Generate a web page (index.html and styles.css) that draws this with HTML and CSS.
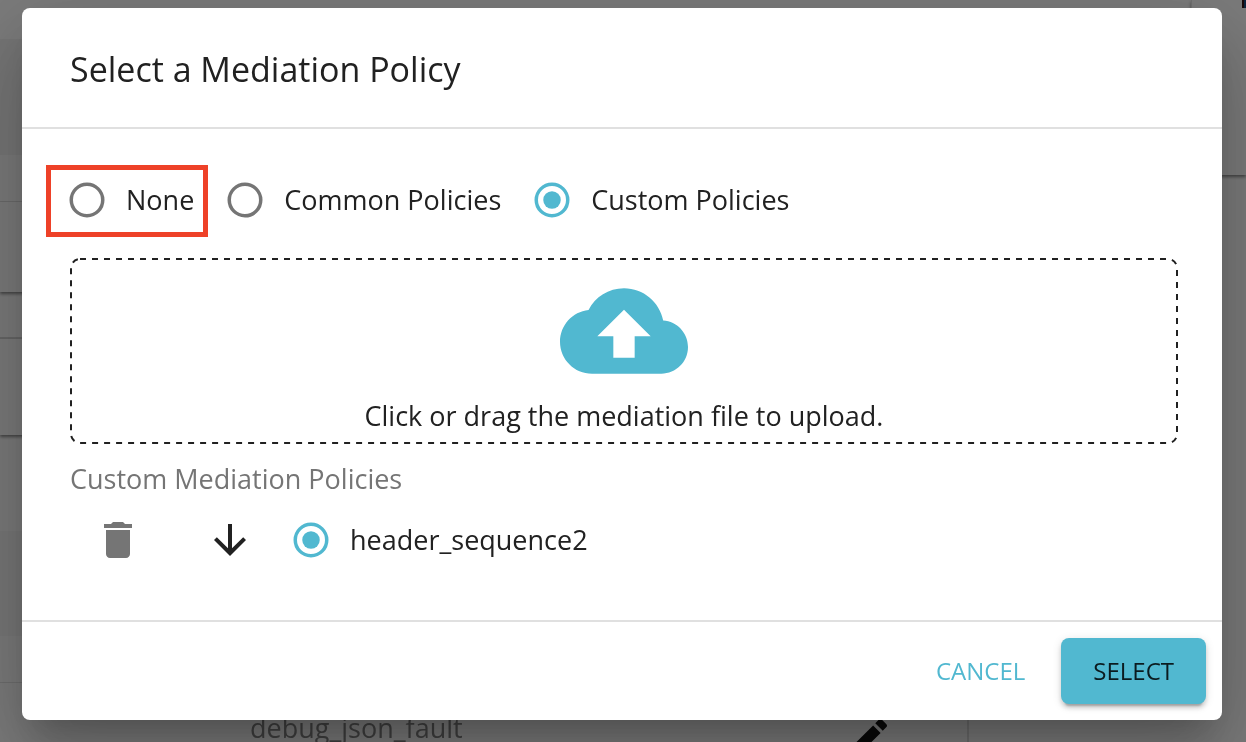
FILE: index.html
```html
<!DOCTYPE html>
<html lang="en">
<head>
<meta charset="utf-8">
<meta name="viewport" content="width=device-width, initial-scale=1">
<title>Select a Mediation Policy</title>
<link rel="stylesheet" href="styles.css">
</head>
<body>
<div class="page" aria-hidden="true">
  <div class="page-main">
    <div class="strip strip-top"></div>
    <div class="strip strip-head"></div>
    <div class="strip strip-line"></div>
    <div class="strip strip-card"></div>
    <div class="strip strip-bar"></div>
    <div class="strip strip-card-tall"></div>
    <div class="strip strip-gap"></div>
    <div class="strip strip-shade"></div>
    <div class="strip strip-rule"></div>
    <div class="resource-row">
      <span>debug_json_fault</span>
      <svg class="icon" viewBox="0 0 24 24"><path d="M3 17.25V21h3.75L17.81 9.94l-3.75-3.75L3 17.25zM20.71 7.04c.39-.39.39-1.02 0-1.41l-2.34-2.34a.9959.9959 0 0 0-1.41 0l-1.83 1.83 3.75 3.75 1.83-1.83z"/></svg>
    </div>
  </div>
  <div class="page-side">
    <div class="side-card"><i class="side-mark"></i></div>
  </div>
</div>

<div class="overlay">
  <form class="dialog" role="dialog" aria-labelledby="dialog-title">
    <header class="dialog-header"><h2 id="dialog-title">Select a Mediation Policy</h2></header>
    <div class="dialog-content">
      <div class="options" role="radiogroup" aria-label="Policy type">
        <label class="option highlighted">
          <span class="radio"><input type="radio" name="type"><svg viewBox="0 0 24 24"><circle class="ring" cx="12" cy="12" r="9"/><circle class="dot" cx="12" cy="12" r="5"/></svg></span>None
        </label>
        <label class="option">
          <span class="radio"><input type="radio" name="type"><svg viewBox="0 0 24 24"><circle class="ring" cx="12" cy="12" r="9"/><circle class="dot" cx="12" cy="12" r="5"/></svg></span>Common Policies
        </label>
        <label class="option">
          <span class="radio"><input type="radio" name="type" checked><svg viewBox="0 0 24 24"><circle class="ring" cx="12" cy="12" r="9"/><circle class="dot" cx="12" cy="12" r="5"/></svg></span>Custom Policies
        </label>
      </div>
      <button type="button" class="dropzone">
        <svg class="dashes"><rect x="1" y="1" rx="9"/></svg>
        <svg class="cloud" viewBox="0 4 24 16"><path d="M19.35 10.04C18.67 6.59 15.64 4 12 4 9.11 4 6.6 5.64 5.35 8.04 2.34 8.36 0 10.91 0 14c0 3.31 2.69 6 6 6h13c2.76 0 5-2.24 5-5 0-2.64-2.05-4.78-4.65-4.96zM14 13v4h-4v-4H7l5-5 5 5h-3z"/></svg>
        <span>Click or drag the mediation file to upload.</span>
      </button>
      <h3 class="caption">Custom Mediation Policies</h3>
      <div class="policy">
        <button type="button" class="icon-button muted" aria-label="Delete"><svg class="icon" viewBox="0 0 24 24"><path d="M6 19c0 1.1.9 2 2 2h8c1.1 0 2-.9 2-2V7H6v12zM19 4h-3.5l-1-1h-5l-1 1H5v2h14V4z"/></svg></button>
        <button type="button" class="icon-button" aria-label="Download"><svg class="icon" viewBox="0 0 24 24"><path d="M20 12l-1.41-1.41L13 16.17V4h-2v12.17l-5.58-5.59L4 12l8 8 8-8z"/></svg></button>
        <label class="option">
          <span class="radio"><input type="radio" name="policy" checked><svg viewBox="0 0 24 24"><circle class="ring" cx="12" cy="12" r="9"/><circle class="dot" cx="12" cy="12" r="5"/></svg></span>header_sequence2
        </label>
      </div>
    </div>
    <footer class="dialog-actions">
      <button type="button" class="button">CANCEL</button>
      <button type="button" class="button primary">SELECT</button>
    </footer>
  </form>
</div>
</body>
</html>
```
FILE: styles.css
```css
* { box-sizing: border-box; }

body {
  margin: 0;
  min-height: 100vh;
  overflow: hidden;
  background: #f6f6f6;
  color: #212121;
  font: 27px/42px "Open Sans", "Noto Sans", sans-serif;
}

h2, h3 { margin: 0; font-weight: 400; }
button { border: 0; background: none; color: inherit; font: inherit; padding: 0; cursor: pointer; }
svg { display: block; fill: currentColor; }
.icon { width: 48px; height: 48px; }

/* Page behind the dialog */
.page { position: fixed; inset: 0; display: flex; overflow: hidden; }
.page-main { flex: 0 0 969px; }
.page-side { flex: 1; display: flex; justify-content: flex-end; }
.strip-top { height: 39px; }
.strip-head { height: 116px; background: #ececec; }
.strip-line { height: 47px; border-bottom: 1px solid #dadada; }
.strip-card { height: 90px; box-shadow: 0 2px 3px #888; }
.strip-bar { height: 47px; border-bottom: 2px solid #cfcfcf; }
.strip-card-tall { height: 96px; box-shadow: 0 2px 3px #888; }
.strip-gap { height: 96px; }
.strip-shade { height: 105px; background: #efefef; }
.strip-rule { height: 47px; border-bottom: 1px solid #dcdcdc; }
.resource-row {
  display: flex;
  justify-content: space-between;
  align-items: flex-start;
  padding: 24px 74px 0 250px;
  border-right: 2px solid #d8d8d8;
  color: #818181;
}
.resource-row .icon { margin-top: 6px; color: #111; }
.side-card {
  width: 55px;
  height: 175px;
  border-left: 1px solid #ddd;
  box-shadow: 0 2px 3px #888;
  display: flex;
  justify-content: flex-end;
}
.side-mark { width: 4px; height: 8px; background: #18467a; border-left: 2px solid #311; }

/* Dialog */
.overlay { position: relative; min-height: 100vh; padding: 8px 24px 22px 22px; background: rgba(0, 0, 0, .5); }
.dialog {
  background: #fff;
  border-radius: 8px;
  box-shadow: 0 22px 30px -14px rgba(0, 0, 0, .2), 0 48px 76px 6px rgba(0, 0, 0, .14), 0 18px 92px 16px rgba(0, 0, 0, .12);
}
.dialog-header { padding: 33px 48px 30px; border-bottom: 2px solid #e0e0e0; }
.dialog-header h2 { font-size: 34px; line-height: 56px; }
.dialog-content { padding: 32px 44px 41px 48px; }

.options { display: flex; flex-wrap: wrap; }
.option { position: relative; display: flex; align-items: center; margin: 0 34px 0 -22px; cursor: pointer; }
.radio { position: relative; padding: 18px; color: #757575; }
.radio svg { width: 42px; height: 42px; }
.radio input { position: absolute; inset: 0; width: 100%; height: 100%; margin: 0; opacity: 0; cursor: pointer; }
.ring { fill: none; stroke: currentColor; stroke-width: 2; }
.dot { display: none; }
.radio input:checked + svg { color: #51b8d0; }
.radio input:checked + svg .dot { display: block; }
.highlighted::after {
  content: "";
  position: absolute;
  inset: 4px -14px 2px -2px;
  border: 5px solid #ee4128;
}

.dropzone {
  position: relative;
  display: flex;
  flex-direction: column;
  align-items: center;
  gap: 21px;
  width: 100%;
  margin-top: 19px;
  padding: 30px 16px 7px;
}
.dashes { position: absolute; inset: 0; width: 100%; height: 100%; }
.dashes rect {
  width: calc(100% - 2px);
  height: calc(100% - 2px);
  fill: none;
  stroke: #212121;
  stroke-width: 2;
  stroke-dasharray: 6 6;
}
.cloud { width: 128px; height: 86px; color: #51b8d0; }
.caption { margin: 14px 0 1px; font-size: 27px; color: #757575; }
.policy { display: flex; align-items: center; }
.icon-button { padding: 0 24px; margin-right: 16px; }
.muted { color: #757575; }

.dialog-actions { display: flex; justify-content: flex-end; gap: 16px; padding: 16px; border-top: 2px solid #e0e0e0; }
.button { padding: 12px 20px; border-radius: 8px; font-size: 24px; line-height: 42px; color: #51b8d0; }
.primary {
  padding: 12px 32px;
  background: #51b8d0;
  color: #0b1b1f;
  box-shadow: 0 6px 2px -4px rgba(0, 0, 0, .2), 0 4px 4px rgba(0, 0, 0, .14), 0 2px 10px rgba(0, 0, 0, .12);
}
```
